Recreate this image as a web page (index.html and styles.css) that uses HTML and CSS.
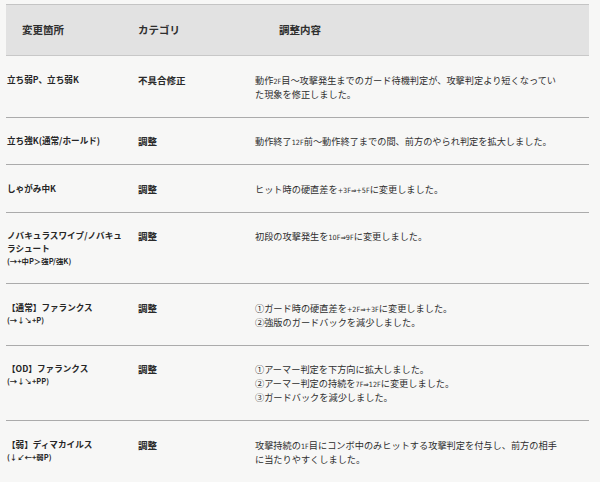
FILE: index.html
```html
<!DOCTYPE html>
<html lang="ja">
<head>
<meta charset="utf-8">
<link rel="stylesheet" href="styles.css">
</head>
<body>
<div class="table">
  <div class="row head">
    <div class="c1">変更箇所</div>
    <div class="c2">カテゴリ</div>
    <div class="c3">調整内容</div>
  </div>
  <div class="row">
    <div class="c1">立ち弱P、立ち弱K</div>
    <div class="c2">不具合修正</div>
    <div class="c3">動作<span class="n">2F</span>目〜攻撃発生までのガード待機判定が、攻撃判定より短くなってい<br>た現象を修正しました。</div>
  </div>
  <div class="row">
    <div class="c1">立ち強K(通常/ホールド)</div>
    <div class="c2">調整</div>
    <div class="c3">動作終了<span class="n">12F</span>前〜動作終了までの間、前方のやられ判定を拡大しました。</div>
  </div>
  <div class="row">
    <div class="c1">しゃがみ中K</div>
    <div class="c2">調整</div>
    <div class="c3">ヒット時の硬直差を<span class="n">+3F⇒+5F</span>に変更しました。</div>
  </div>
  <div class="row">
    <div class="c1">ノバキュラスワイプ/ノバキュ<br>ラシュート<span class="cmd">(→+中P＞強P/強K)</span></div>
    <div class="c2">調整</div>
    <div class="c3">初段の攻撃発生を<span class="n">10F⇒9F</span>に変更しました。</div>
  </div>
  <div class="row">
    <div class="c1">【通常】ファランクス<span class="cmd">(→↓↘+P)</span></div>
    <div class="c2">調整</div>
    <div class="c3">①ガード時の硬直差を<span class="n">+2F⇒+3F</span>に変更しました。<br>②強版のガードバックを減少しました。</div>
  </div>
  <div class="row">
    <div class="c1">【OD】ファランクス<span class="cmd">(→↓↘+PP)</span></div>
    <div class="c2">調整</div>
    <div class="c3">①アーマー判定を下方向に拡大しました。<br>②アーマー判定の持続を<span class="n">7F⇒12F</span>に変更しました。<br>③ガードバックを減少しました。</div>
  </div>
  <div class="row">
    <div class="c1">【弱】ディマカイルス<span class="cmd">(↓↙←+弱P)</span></div>
    <div class="c2">調整</div>
    <div class="c3">攻撃持続の<span class="n">1F</span>目にコンボ中のみヒットする攻撃判定を付与し、前方の相手<br>に当たりやすくしました。</div>
  </div>
</div>
</body>
</html>
```

FILE: styles.css
```css
html, body {
  margin: 0;
  padding: 0;
  background: #f7f7f6;
}
body {
  font-family: "Noto Sans CJK JP", "Noto Sans", sans-serif;
  color: #333;
  width: 600px;
  height: 482px;
  overflow: hidden;
}
.table {
  margin: 4px 0 0 6px;
  width: 583px;
  border-top: 1px solid #c4c4c4;
}
.row {
  display: grid;
  grid-template-columns: 131px 117px 1fr;
  border-bottom: 1px solid #ababab;
}
.row > div {
  padding: 16.5px 0 16px 1px;
}
.c1 {
  font-size: 8.6px;
  font-weight: 700;
  line-height: 13px;
  color: #262626;
}
.c2 {
  font-size: 9.5px;
  font-weight: 700;
  line-height: 14px;
  color: #2a2a2a;
}
.c3 {
  font-size: 9.2px;
  line-height: 14px;
  color: #2e2e2e;
}
.cmd {
  display: block;
  font-size: 7.4px;
  line-height: 12px;
}
.n {
  font-family: "DejaVu Sans Condensed", "DejaVu Sans", sans-serif;
  font-size: 7.2px;
  line-height: 1;
}
.head {
  background: #e2e2e2;
  height: 50px;
  align-items: center;
  border-bottom: 1px solid #c8c8c8;
}
.head > div {
  padding: 0;
  font-size: 10.5px;
  font-weight: 700;
  color: #2e2e2e;
  line-height: 14px;
}
.head .c1 { padding-left: 16px; }
.head .c2 { padding-left: 1px; }
.head .c3 { padding-left: 25px; }
```
